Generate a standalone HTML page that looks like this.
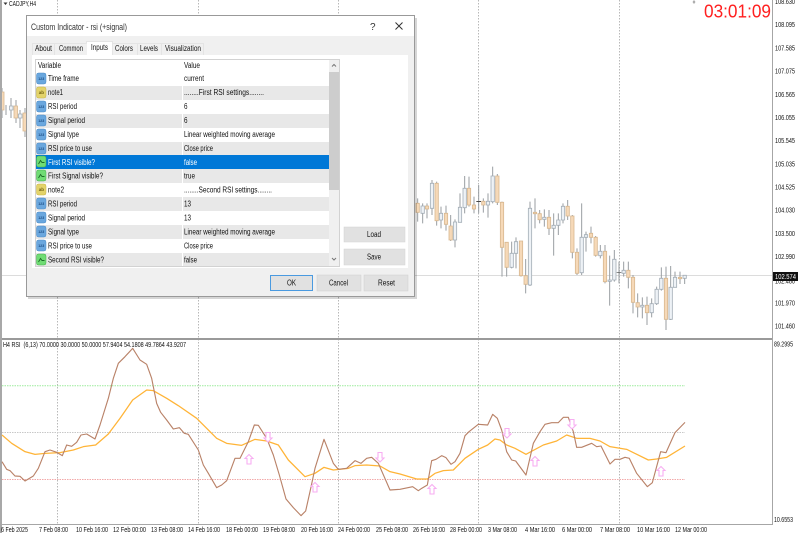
<!DOCTYPE html>
<html><head><meta charset="utf-8"><style>
html,body{margin:0;padding:0;background:#fff;width:800px;height:533px;overflow:hidden}
svg{display:block;filter:blur(.35px)}
text{font-family:"Liberation Sans",sans-serif;font-size:7.600px;fill:#111}
.a text{font-size:7.200px;fill:#111}
.d text{font-size:7.800px}
.i{font-size:3.600px!important;font-weight:bold;fill:#1d4f86!important}
.y{font-size:4.500px!important;font-weight:bold;fill:#6e5f10!important}
</style></head><body>
<svg width="800" height="533" viewBox="0 0 800 533" xmlns="http://www.w3.org/2000/svg">
<rect width="800" height="533" fill="#fff"/>
<!-- grid -->
<path d="M57.500 0V524M198.500 0V524M338.500 0V524M478.500 0V524M619.500 0V524" stroke="#b8b8b8" stroke-dasharray="1.500 1.500" fill="none"/>
<path d="M2 275.500H772" stroke="#dcdcdc" fill="none"/>
<!-- left candles -->
<path d="M2 88V118M6 105V115M11 98V118M16 100V123M20 110V128M25 108V137" stroke="#999ea2" fill="none"/>
<path d="M1 92h3v18h-3zM14 106h3.500v12h-3.500zM23 113h3.500v18h-3.500z" fill="#f6d9b8" stroke="#d8b890" stroke-width=".8"/>
<path d="M9.500 106h3.500v4h-3.500zM18.500 114h3.500v4h-3.500z" fill="#eef2f6" stroke="#a3adb6" stroke-width=".8"/>
<!-- candles -->
<g transform="translate(400,160) scale(.33333)">
<path d="M53 115V185M68 130V190M81 130V175M96 60V165M110 65V197M123 140V205M138 137V212M152 165V243M165 178V262M180 100V187M194 48V160M207 50V140M222 110V160M236 75V160M250 115V158M264 100V173M278 20V130M292 42V135M306 125V350M320 247V350M335 245V325M348 232V325M363 243V350M377 297V400M390 125V378M405 115V205M419 150V190M433 148V200M447 150V225M461 160V287M475 160V225M489 130V190M503 120V180M517 165V295M531 265V345M545 130V345M558 215V275M573 200V250M587 228V290M601 255V295M615 255V370M629 287V437M643 270V365M657 305V370M671 305V350M685 305V385M699 345V460M713 400V472M727 412V475M741 410V495M755 415V472M770 380V435M784 322V392M798 320V510M812 318V480M825 335V382M840 335V372M854 345V372" stroke="#999ea2" stroke-width="3" fill="none"/>
<path d="M229 123h14v3h-14zM650 337h14v2h-14z" fill="#444"/>
<path d="M48 130h10v27h-10zM76 138h10v9h-10zM105 70h10v112h-10zM133 160h10v33h-10zM147 198h10v42h-10zM202 85h10v50h-10zM217 135h10v12h-10zM245 124h10v11h-10zM287 48h10v79h-10zM301 127h10v135h-10zM315 247h10v75h-10zM358 243h10v104h-10zM372 347h10v26h-10zM400 157h10v4h-10zM414 161h10v18h-10zM442 172h10v33h-10zM498 139h10v29h-10zM512 168h10v109h-10zM526 277h10v63h-10zM568 220h10v12h-10zM582 232h10v54h-10zM610 274h10v91h-10zM680 331h10v21h-10zM694 352h10v75h-10zM708 428h10v13h-10zM736 436h10v22h-10zM793 355h10v123h-10zM835 352h10v4h-10z" fill="#f6d9b8" stroke="#d8b890" stroke-width="2.400"/>
<path d="M63 138h10v22h-10zM91 70h10v75h-10zM118 160h10v20h-10zM160 186h10v54h-10zM175 142h10v45h-10zM189 85h10v58h-10zM259 124h10v11h-10zM273 48h10v77h-10zM330 280h10v42h-10zM343 245h10v35h-10zM385 145h10v230h-10zM428 172h10v6h-10zM456 196h10v9h-10zM470 180h10v16h-10zM484 139h10v41h-10zM540 232h10v106h-10zM553 224h10v8h-10zM596 274h10v13h-10zM624 360h10v4h-10zM638 298h10v62h-10zM666 331h10v9h-10zM722 436h10v5h-10zM750 431h10v27h-10zM765 388h10v43h-10zM779 355h10v33h-10zM807 382h10v96h-10zM820 352h10v30h-10zM849 346h10v9h-10z" fill="#eef2f6" stroke="#a3adb6" stroke-width="2.400"/>
</g>
<path d="M694 0l1.500 2-1.500 2-1.500-2z" fill="#aaa"/>
<!-- chart frame -->
<rect x="0" y="0" width="2" height="533" fill="#a8a8a8"/>
<rect x="2" y="338" width="770" height="2" fill="#9a9a9a"/>
<rect x="772" y="0" width="1" height="525" fill="#a6a6a6"/>
<rect x="2" y="524" width="771" height="1" fill="#a6a6a6"/>
<!-- levels -->
<path d="M2 385.700H685" stroke="#9ceb9c" stroke-dasharray="1.500 1" fill="none"/>
<path d="M2 432.500H685" stroke="#c8c8c8" stroke-dasharray="1.500 1" fill="none"/>
<path d="M2 479.500H685" stroke="#f2a8a8" stroke-dasharray="1.500 1" fill="none"/>
<!-- RSI lines -->
<g transform="translate(0,335) scale(.33333)" fill="none" stroke-linejoin="round">
<polyline stroke="#ffb437" stroke-width="3.800" points="6,300 35,325 75,350 105,358 135,355 180,353 220,345 250,335 287,330 325,297 360,250 398,195 440,165 460,167 500,190 535,212 590,250 650,310 680,325 725,331 765,313 800,318 835,330 865,375 915,425 945,415 972,397 1000,405 1045,400 1065,392 1100,390 1140,393 1170,410 1200,417 1250,432 1282,432 1305,415 1330,407 1360,405 1395,370 1435,343 1463,330 1485,312 1500,315 1520,330 1545,340 1578,358 1630,330 1670,318 1700,300 1730,310 1770,310 1800,318 1830,335 1880,343 1945,375 1970,372 2000,367 2055,333"/>
<polyline stroke="#b98268" stroke-width="3.400" points="6,380 20,403 30,407 45,423 60,424 75,438 100,423 115,400 135,350 150,345 170,352 187,362 200,330 215,334 230,322 243,300 260,297 285,312 300,270 325,190 340,130 355,85 375,65 398,40 420,75 440,88 455,130 470,205 482,232 500,255 520,282 538,278 553,295 565,298 595,345 610,390 625,415 650,458 665,450 680,437 705,370 720,370 745,320 763,270 775,271 800,310 820,360 838,420 858,492 880,518 903,542 917,528 930,470 945,400 972,313 1000,385 1015,403 1040,400 1065,377 1083,385 1100,370 1115,367 1135,385 1170,465 1200,463 1238,455 1255,467 1265,460 1282,450 1295,377 1308,373 1325,362 1338,368 1353,388 1365,380 1380,355 1395,302 1407,290 1435,268 1463,270 1478,238 1492,250 1505,285 1520,350 1535,375 1547,378 1578,420 1600,325 1620,290 1635,268 1655,263 1675,263 1690,247 1705,247 1720,290 1730,337 1745,337 1775,325 1790,335 1803,333 1830,387 1845,373 1860,373 1875,367 1888,370 1910,415 1942,455 1957,443 1982,350 1998,353 2025,293 2055,262"/>
</g>
<!-- arrows -->
<g fill="#fff" stroke="#f7aef2" stroke-width="1.100">
<path d="M249 454.500l4 4h-2v5.500h-4v-5.500h-2z"/>
<path d="M315 482.500l4 4h-2v5.500h-4v-5.500h-2z"/>
<path d="M432 484.500l4 4h-2v5.500h-4v-5.500h-2z"/>
<path d="M535 456.500l4 4h-2v5.500h-4v-5.500h-2z"/>
<path d="M661 466.500l4 4h-2v5.500h-4v-5.500h-2z"/>
<path d="M268 442l4-4h-2v-5.500h-4v5.500h-2z"/>
<path d="M380 462l4-4h-2v-5.500h-4v5.500h-2z"/>
<path d="M507 438l4-4h-2v-5.500h-4v5.500h-2z"/>
<path d="M572 429l4-4h-2v-5.500h-4v5.500h-2z"/>
</g>
<!-- clock -->
<text x="704" y="17.500" textLength="67" lengthAdjust="spacingAndGlyphs" style="font-size:18.500px;fill:#ff2020">03:01:09</text>
<!-- price axis -->
<g class="a">
<text x="775" y="3.800" textLength="20" lengthAdjust="spacingAndGlyphs">108.630</text>
<text x="775" y="27" textLength="20" lengthAdjust="spacingAndGlyphs">108.095</text>
<text x="775" y="50.500" textLength="20" lengthAdjust="spacingAndGlyphs">107.585</text>
<text x="775" y="73.500" textLength="20" lengthAdjust="spacingAndGlyphs">107.075</text>
<text x="775" y="97" textLength="20" lengthAdjust="spacingAndGlyphs">106.565</text>
<text x="775" y="120" textLength="20" lengthAdjust="spacingAndGlyphs">106.055</text>
<text x="775" y="143" textLength="20" lengthAdjust="spacingAndGlyphs">105.545</text>
<text x="775" y="166.500" textLength="20" lengthAdjust="spacingAndGlyphs">105.035</text>
<text x="775" y="189.500" textLength="20" lengthAdjust="spacingAndGlyphs">104.525</text>
<text x="775" y="212.500" textLength="20" lengthAdjust="spacingAndGlyphs">104.030</text>
<text x="775" y="236" textLength="20" lengthAdjust="spacingAndGlyphs">103.500</text>
<text x="775" y="259" textLength="20" lengthAdjust="spacingAndGlyphs">102.990</text>
<text x="775" y="283.500" textLength="20" lengthAdjust="spacingAndGlyphs">102.480</text>
<text x="775" y="305.500" textLength="20" lengthAdjust="spacingAndGlyphs">101.970</text>
<text x="775" y="328.500" textLength="20" lengthAdjust="spacingAndGlyphs">101.460</text>
<text x="774" y="346.500" textLength="19" lengthAdjust="spacingAndGlyphs">89.2995</text>
<text x="774" y="522" textLength="19" lengthAdjust="spacingAndGlyphs">10.6553</text>
<rect x="773" y="272" width="25" height="9" fill="#111"/>
<text x="775" y="279" textLength="21" lengthAdjust="spacingAndGlyphs" style="fill:#fff">102.574</text>
<!-- labels -->
<path d="M3.500 2.500h4l-2 2.500z" fill="#333"/>
<text x="9" y="6" textLength="27" lengthAdjust="spacingAndGlyphs">CADJPY,H4</text>
<text x="3" y="347" textLength="183" lengthAdjust="spacingAndGlyphs" xml:space="preserve">H4 RSI  (6,13) 70.0000 30.0000 50.0000 57.9404 54.1808 49.7864 43.9207</text>
<text x="1" y="532" textLength="27" lengthAdjust="spacingAndGlyphs">6 Feb 2025</text>
<text x="39" y="532" textLength="29" lengthAdjust="spacingAndGlyphs">7 Feb 08:00</text>
<text x="76" y="532" textLength="32" lengthAdjust="spacingAndGlyphs">10 Feb 16:00</text>
<text x="113" y="532" textLength="33" lengthAdjust="spacingAndGlyphs">12 Feb 00:00</text>
<text x="151" y="532" textLength="32" lengthAdjust="spacingAndGlyphs">13 Feb 08:00</text>
<text x="188" y="532" textLength="32" lengthAdjust="spacingAndGlyphs">14 Feb 16:00</text>
<text x="226" y="532" textLength="32" lengthAdjust="spacingAndGlyphs">18 Feb 00:00</text>
<text x="263" y="532" textLength="32" lengthAdjust="spacingAndGlyphs">19 Feb 08:00</text>
<text x="301" y="532" textLength="32" lengthAdjust="spacingAndGlyphs">20 Feb 16:00</text>
<text x="338" y="532" textLength="32" lengthAdjust="spacingAndGlyphs">24 Feb 00:00</text>
<text x="376" y="532" textLength="32" lengthAdjust="spacingAndGlyphs">25 Feb 08:00</text>
<text x="413" y="532" textLength="32" lengthAdjust="spacingAndGlyphs">26 Feb 16:00</text>
<text x="450" y="532" textLength="32" lengthAdjust="spacingAndGlyphs">28 Feb 00:00</text>
<text x="488" y="532" textLength="29" lengthAdjust="spacingAndGlyphs">3 Mar 08:00</text>
<text x="525" y="532" textLength="30" lengthAdjust="spacingAndGlyphs">4 Mar 16:00</text>
<text x="562" y="532" textLength="30" lengthAdjust="spacingAndGlyphs">6 Mar 00:00</text>
<text x="600" y="532" textLength="30" lengthAdjust="spacingAndGlyphs">7 Mar 08:00</text>
<text x="637" y="532" textLength="33" lengthAdjust="spacingAndGlyphs">10 Mar 16:00</text>
<text x="675" y="532" textLength="32" lengthAdjust="spacingAndGlyphs">12 Mar 00:00</text>
</g>
<!-- dialog -->
<rect x="28" y="18" width="389" height="281" fill="#000" opacity=".16"/>
<rect x="26.500" y="15.500" width="388" height="281" fill="#f0f0f0" stroke="#999"/>
<rect x="27" y="16" width="387" height="20" fill="#fff"/>
<text x="31" y="30" textLength="96" lengthAdjust="spacingAndGlyphs" style="font-size:9.500px;fill:#333">Custom Indicator - rsi (+signal)</text>
<text x="370" y="30" style="font-size:10px;fill:#333">?</text>
<path d="M395.500 22.500l7 7m0-7l-7 7" stroke="#333" fill="none"/>
<!-- tabs -->
<rect x="32" y="55" width="376" height="213" fill="#fff"/>
<rect x="87" y="41" width="25" height="14" fill="#fff"/>
<path d="M32.500 55V43.500H86.500M86.500 43.500V41.500H112.500V43.500H203.500V55M54.500 43.500V55M112.500 43.500V55M137.500 43.500V55M161.500 43.500V55" stroke="#e4e4e4" fill="none"/>
<g class="d">
<text x="35" y="51" textLength="17" lengthAdjust="spacingAndGlyphs">About</text>
<text x="59" y="51" textLength="24" lengthAdjust="spacingAndGlyphs">Common</text>
<text x="91" y="50" textLength="17" lengthAdjust="spacingAndGlyphs">Inputs</text>
<text x="115" y="51" textLength="18" lengthAdjust="spacingAndGlyphs">Colors</text>
<text x="140" y="51" textLength="18" lengthAdjust="spacingAndGlyphs">Levels</text>
<text x="165" y="51" textLength="36" lengthAdjust="spacingAndGlyphs">Visualization</text>
<!-- table -->
<rect x="35.500" y="59.500" width="304" height="207" fill="#fff" stroke="#d2d2d2"/>
<rect x="36" y="86" width="293" height="14" fill="#e8e8e8"/>
<rect x="36" y="114" width="293" height="14" fill="#e8e8e8"/>
<rect x="36" y="142" width="293" height="14" fill="#e8e8e8"/>
<rect x="36" y="155" width="293" height="14" fill="#0078d7"/>
<rect x="36" y="169" width="293" height="14" fill="#e8e8e8"/>
<rect x="36" y="197" width="293" height="14" fill="#e8e8e8"/>
<rect x="36" y="225" width="293" height="14" fill="#e8e8e8"/>
<rect x="36" y="253" width="293" height="13" fill="#e8e8e8"/>
<path d="M182.500 72V155M182.500 169V266" stroke="#fff" fill="none"/>
<!-- scrollbar -->
<rect x="329" y="60" width="10" height="206" fill="#f0f0f0"/>
<rect x="329" y="72" width="10" height="118" fill="#cdcdcd"/>
<path d="M332 66.500l2-2 2 2M332 258l2 2 2-2" stroke="#777" fill="none"/>
<text x="38" y="68" textLength="23" lengthAdjust="spacingAndGlyphs">Variable</text>
<text x="184" y="68" textLength="16" lengthAdjust="spacingAndGlyphs">Value</text>
<!-- icons -->
<g fill="#6aa7de" stroke="#4d8bc6" stroke-width=".5">
<rect x="36.500" y="73" width="9.500" height="11" rx="2"/>
<rect x="36.500" y="101" width="9.500" height="11" rx="2"/>
<rect x="36.500" y="115" width="9.500" height="11" rx="2"/>
<rect x="36.500" y="129" width="9.500" height="11" rx="2"/>
<rect x="36.500" y="143" width="9.500" height="11" rx="2"/>
<rect x="36.500" y="198" width="9.500" height="11" rx="2"/>
<rect x="36.500" y="212" width="9.500" height="11" rx="2"/>
<rect x="36.500" y="226" width="9.500" height="11" rx="2"/>
<rect x="36.500" y="240" width="9.500" height="11" rx="2"/>
</g>
<g fill="#e3d36a" stroke="#c6b345" stroke-width=".5">
<rect x="36.500" y="87" width="9.500" height="11" rx="2"/>
<rect x="36.500" y="184" width="9.500" height="11" rx="2"/>
</g>
<g fill="#70dc74" stroke="#45ad4a" stroke-width=".5">
<rect x="36.500" y="156" width="9.500" height="11" rx="2"/>
<rect x="36.500" y="170" width="9.500" height="11" rx="2"/>
<rect x="36.500" y="254" width="9.500" height="11" rx="2"/>
</g>
<path d="M38.500 164l2-3.500 1.500 2 2.500 0M38.500 178l2-3.500 1.500 2 2.500 0M38.500 262l2-3.500 1.500 2 2.500 0" stroke="#1d6e28" stroke-width=".9" fill="none"/>
<text class="i" x="38.300" y="80">123</text>
<text class="y" x="38.800" y="94">ab</text>
<text class="i" x="38.300" y="108">123</text>
<text class="i" x="38.300" y="122">123</text>
<text class="i" x="38.300" y="136">123</text>
<text class="i" x="38.300" y="150">123</text>
<text class="y" x="38.800" y="191">ab</text>
<text class="i" x="38.300" y="205">123</text>
<text class="i" x="38.300" y="219">123</text>
<text class="i" x="38.300" y="233">123</text>
<text class="i" x="38.300" y="247">123</text>
<!-- row text -->
<text x="48" y="81" textLength="31" lengthAdjust="spacingAndGlyphs">Time frame</text>
<text x="184" y="81" textLength="20" lengthAdjust="spacingAndGlyphs">current</text>
<text x="48" y="95" textLength="15" lengthAdjust="spacingAndGlyphs">note1</text>
<text x="184" y="95" textLength="80" lengthAdjust="spacingAndGlyphs">........First RSI settings........</text>
<text x="48" y="109" textLength="29" lengthAdjust="spacingAndGlyphs">RSI period</text>
<text x="184" y="109" textLength="3.500" lengthAdjust="spacingAndGlyphs">6</text>
<text x="48" y="123" textLength="37" lengthAdjust="spacingAndGlyphs">Signal period</text>
<text x="184" y="123" textLength="3.500" lengthAdjust="spacingAndGlyphs">6</text>
<text x="48" y="137" textLength="31" lengthAdjust="spacingAndGlyphs">Signal type</text>
<text x="184" y="137" textLength="91" lengthAdjust="spacingAndGlyphs">Linear weighted moving average</text>
<text x="48" y="151" textLength="44" lengthAdjust="spacingAndGlyphs">RSI price to use</text>
<text x="184" y="151" textLength="29" lengthAdjust="spacingAndGlyphs">Close price</text>
<text x="48" y="165" textLength="47" lengthAdjust="spacingAndGlyphs" style="fill:#fff">First RSI visible?</text>
<text x="184" y="165" textLength="13" lengthAdjust="spacingAndGlyphs" style="fill:#fff">false</text>
<text x="48" y="178.500" textLength="55" lengthAdjust="spacingAndGlyphs">First Signal visible?</text>
<text x="184" y="178.500" textLength="11" lengthAdjust="spacingAndGlyphs">true</text>
<text x="48" y="192.500" textLength="16" lengthAdjust="spacingAndGlyphs">note2</text>
<text x="184" y="192.500" textLength="88" lengthAdjust="spacingAndGlyphs">........Second RSI settings........</text>
<text x="48" y="206.500" textLength="29" lengthAdjust="spacingAndGlyphs">RSI period</text>
<text x="184" y="206.500" textLength="7" lengthAdjust="spacingAndGlyphs">13</text>
<text x="48" y="220.500" textLength="37" lengthAdjust="spacingAndGlyphs">Signal period</text>
<text x="184" y="220.500" textLength="7" lengthAdjust="spacingAndGlyphs">13</text>
<text x="48" y="234.500" textLength="31" lengthAdjust="spacingAndGlyphs">Signal type</text>
<text x="184" y="234.500" textLength="91" lengthAdjust="spacingAndGlyphs">Linear weighted moving average</text>
<text x="48" y="248.500" textLength="44" lengthAdjust="spacingAndGlyphs">RSI price to use</text>
<text x="184" y="248.500" textLength="29" lengthAdjust="spacingAndGlyphs">Close price</text>
<text x="48" y="262.500" textLength="56" lengthAdjust="spacingAndGlyphs">Second RSI visible?</text>
<text x="184" y="262.500" textLength="13" lengthAdjust="spacingAndGlyphs">false</text>
<!-- buttons -->
<rect x="344" y="227" width="61" height="15" fill="#e1e1e1" stroke="#d2d2d2" stroke-width=".5"/>
<rect x="344" y="249" width="61" height="16" fill="#e1e1e1" stroke="#d2d2d2" stroke-width=".5"/>
<rect x="270.500" y="275.500" width="42" height="15" fill="#e1e1e1" stroke="#4a9ae0"/>
<rect x="317" y="275" width="44" height="16" fill="#e1e1e1" stroke="#cfcfcf" stroke-width=".5"/>
<rect x="364" y="275" width="44" height="16" fill="#e1e1e1" stroke="#cfcfcf" stroke-width=".5"/>
<text x="367" y="237" textLength="14" lengthAdjust="spacingAndGlyphs">Load</text>
<text x="367" y="259.500" textLength="14" lengthAdjust="spacingAndGlyphs">Save</text>
<text x="287" y="285.500" textLength="9" lengthAdjust="spacingAndGlyphs">OK</text>
<text x="329" y="285.500" textLength="19" lengthAdjust="spacingAndGlyphs">Cancel</text>
<text x="378" y="285.500" textLength="17" lengthAdjust="spacingAndGlyphs">Reset</text>
</g>
</svg>
</body></html>
